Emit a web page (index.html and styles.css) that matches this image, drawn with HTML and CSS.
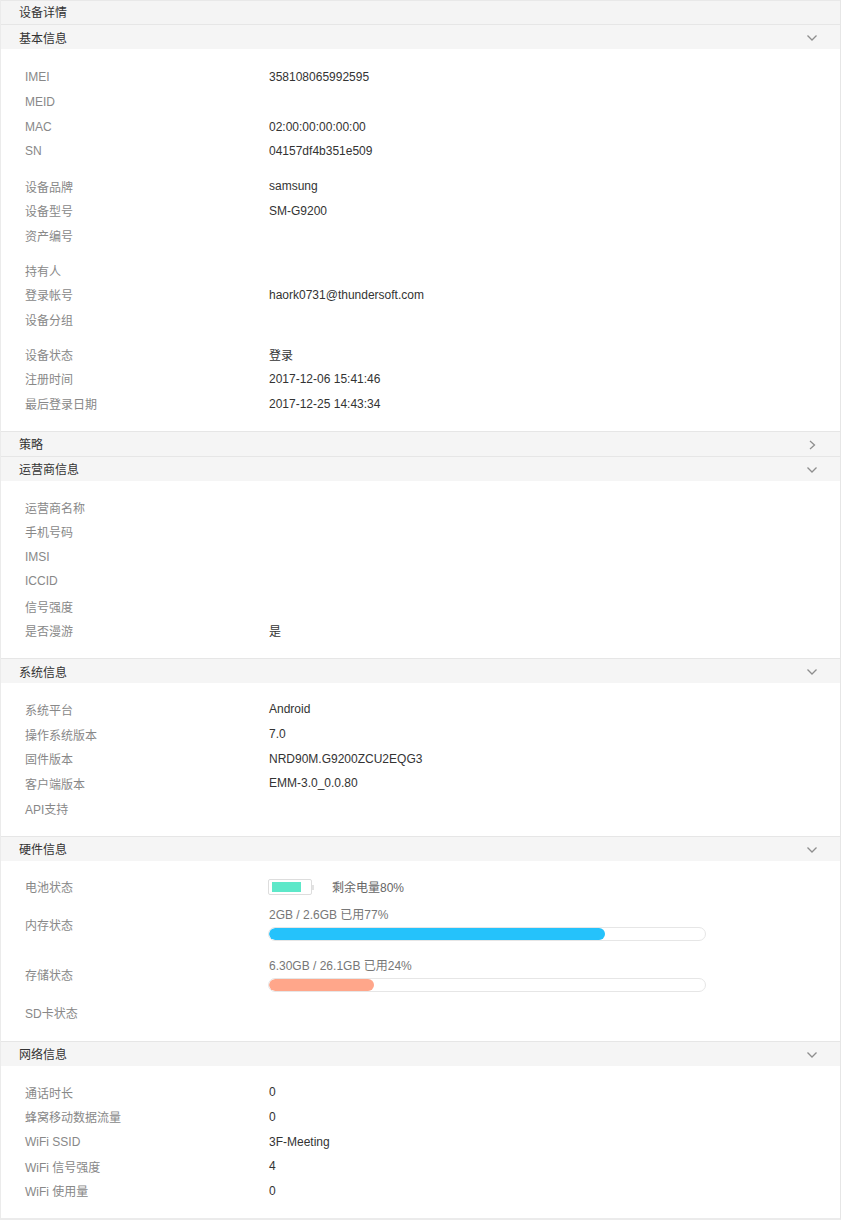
FILE: index.html
```html
<!DOCTYPE html>
<html lang="zh">
<head>
<meta charset="utf-8">
<title>设备详情</title>
<link rel="stylesheet" href="styles.css">
</head>
<body>
<div class="page">
  <div class="title">设备详情</div>

  <div class="sec-head"><span>基本信息</span><svg class="chev" width="12" height="8" viewBox="0 0 12 8"><path d="M1.5 1.5 L6 6 L10.5 1.5" /></svg></div>
  <div class="sec-body basic">
    <div class="group">
      <div class="row"><span class="label">IMEI</span><span class="value">358108065992595</span></div>
      <div class="row"><span class="label">MEID</span><span class="value"></span></div>
      <div class="row"><span class="label">MAC</span><span class="value">02:00:00:00:00:00</span></div>
      <div class="row"><span class="label">SN</span><span class="value">04157df4b351e509</span></div>
    </div>
    <div class="group">
      <div class="row"><span class="label">设备品牌</span><span class="value">samsung</span></div>
      <div class="row"><span class="label">设备型号</span><span class="value">SM-G9200</span></div>
      <div class="row"><span class="label">资产编号</span><span class="value"></span></div>
    </div>
    <div class="group">
      <div class="row"><span class="label">持有人</span><span class="value"></span></div>
      <div class="row"><span class="label">登录帐号</span><span class="value">haork0731@thundersoft.com</span></div>
      <div class="row"><span class="label">设备分组</span><span class="value"></span></div>
    </div>
    <div class="group">
      <div class="row"><span class="label">设备状态</span><span class="value">登录</span></div>
      <div class="row"><span class="label">注册时间</span><span class="value">2017-12-06 15:41:46</span></div>
      <div class="row"><span class="label">最后登录日期</span><span class="value">2017-12-25 14:43:34</span></div>
    </div>
  </div>

  <div class="sec-head"><span>策略</span><svg class="chev" width="12" height="10" viewBox="0 0 12 10"><path d="M4 1 L8.5 5 L4 9" /></svg></div>

  <div class="sec-head"><span>运营商信息</span><svg class="chev" width="12" height="8" viewBox="0 0 12 8"><path d="M1.5 1.5 L6 6 L10.5 1.5" /></svg></div>
  <div class="sec-body">
    <div class="row"><span class="label">运营商名称</span><span class="value"></span></div>
    <div class="row"><span class="label">手机号码</span><span class="value"></span></div>
    <div class="row"><span class="label">IMSI</span><span class="value"></span></div>
    <div class="row"><span class="label">ICCID</span><span class="value"></span></div>
    <div class="row"><span class="label">信号强度</span><span class="value"></span></div>
    <div class="row"><span class="label">是否漫游</span><span class="value">是</span></div>
  </div>

  <div class="sec-head"><span>系统信息</span><svg class="chev" width="12" height="8" viewBox="0 0 12 8"><path d="M1.5 1.5 L6 6 L10.5 1.5" /></svg></div>
  <div class="sec-body">
    <div class="row"><span class="label">系统平台</span><span class="value">Android</span></div>
    <div class="row"><span class="label">操作系统版本</span><span class="value">7.0</span></div>
    <div class="row"><span class="label">固件版本</span><span class="value">NRD90M.G9200ZCU2EQG3</span></div>
    <div class="row"><span class="label">客户端版本</span><span class="value">EMM-3.0_0.0.80</span></div>
    <div class="row"><span class="label">API支持</span><span class="value"></span></div>
  </div>

  <div class="sec-head"><span>硬件信息</span><svg class="chev" width="12" height="8" viewBox="0 0 12 8"><path d="M1.5 1.5 L6 6 L10.5 1.5" /></svg></div>
  <div class="sec-body hardware">
    <div class="row">
      <span class="label">电池状态</span>
      <span class="value battery-val">
        <span class="battery"><span class="battery-fill"></span></span>
        <span class="battery-text">剩余电量80%</span>
      </span>
    </div>
    <div class="row tall">
      <span class="label">内存状态</span>
      <span class="value meter">
        <span class="meter-text">2GB / 2.6GB 已用77%</span>
        <span class="bar"><span class="fill fill-blue" style="width:77%"></span></span>
      </span>
    </div>
    <div class="row tall">
      <span class="label">存储状态</span>
      <span class="value meter">
        <span class="meter-text">6.30GB / 26.1GB 已用24%</span>
        <span class="bar"><span class="fill fill-orange" style="width:24%"></span></span>
      </span>
    </div>
    <div class="row"><span class="label">SD卡状态</span><span class="value"></span></div>
  </div>

  <div class="sec-head"><span>网络信息</span><svg class="chev" width="12" height="8" viewBox="0 0 12 8"><path d="M1.5 1.5 L6 6 L10.5 1.5" /></svg></div>
  <div class="sec-body last">
    <div class="row"><span class="label">通话时长</span><span class="value">0</span></div>
    <div class="row"><span class="label">蜂窝移动数据流量</span><span class="value">0</span></div>
    <div class="row"><span class="label">WiFi SSID</span><span class="value">3F-Meeting</span></div>
    <div class="row"><span class="label">WiFi 信号强度</span><span class="value">4</span></div>
    <div class="row"><span class="label">WiFi 使用量</span><span class="value">0</span></div>
  </div>
</div>
</body>
</html>
```

FILE: styles.css
```css
html, body {
  margin: 0;
  padding: 0;
  background: #ffffff;
}

body {
  font-family: "Liberation Sans", "Noto Sans CJK SC", sans-serif;
  font-size: 12px;
  color: #333333;
}

.page {
  width: 841px;
  box-sizing: border-box;
  border-left: 1px solid #ebebeb;
  border-right: 1px solid #e6e6e6;
  border-bottom: 2px solid #ebebeb;
}

.title {
  height: 24px;
  box-sizing: border-box;
  border-top: 1px solid #e8e8e8;
  background: #f4f4f4;
  padding-left: 18px;
  line-height: 24px;
  color: #333333;
}

.sec-head {
  height: 25px;
  box-sizing: border-box;
  border-top: 1px solid #e6e6e6;
  background: #f5f5f5;
  display: flex;
  align-items: center;
  justify-content: space-between;
  padding-left: 18px;
  padding-right: 22px;
  color: #333333;
}

.chev {
  margin-top: 2px;
}

.chev path {
  fill: none;
  stroke: #8e8e8e;
  stroke-width: 1.3;
}

.sec-body {
  padding: 14px 0 15px 24px;
  background: #ffffff;
}

.sec-body.basic {
  padding-top: 16px;
}

.sec-body.hardware {
  padding-bottom: 16px;
}

.sec-body.last {
  padding-bottom: 15px;
}

.group + .group {
  margin-top: 10px;
}

.row {
  display: flex;
  align-items: center;
  height: 24.7px;
}

.row.tall {
  height: 50.5px;
}

.label {
  width: 244px;
  flex: none;
  color: #888888;
}

.value {
  color: #333333;
}

.battery-val {
  display: flex;
  align-items: center;
}

.battery {
  position: relative;
  width: 44px;
  height: 16px;
  box-sizing: border-box;
  border: 1px solid #dddddd;
  border-radius: 2px;
  padding: 2px 3px;
  display: flex;
  margin-left: -1px;
}

.battery::after {
  content: "";
  position: absolute;
  right: -3px;
  top: 5px;
  width: 2px;
  height: 5px;
  background: #e2e2e2;
}

.battery-fill {
  width: 29px;
  height: 10px;
  background: #5de8c9;
}

.battery-text {
  margin-left: 20px;
  color: #666666;
}

.meter {
  display: flex;
  flex-direction: column;
  margin-left: -1px;
}

.meter-text {
  color: #777777;
  line-height: 16px;
  margin-left: 1px;
}

.bar {
  margin-top: 4px;
  width: 438px;
  height: 14px;
  box-sizing: border-box;
  border: 1px solid #e6e6e6;
  border-radius: 7px;
  background: #ffffff;
  display: flex;
  overflow: hidden;
}

.fill {
  height: 100%;
  border-radius: 6px;
}

.fill-blue {
  background: #25c2fb;
}

.fill-orange {
  background: #ffa68a;
}
```
